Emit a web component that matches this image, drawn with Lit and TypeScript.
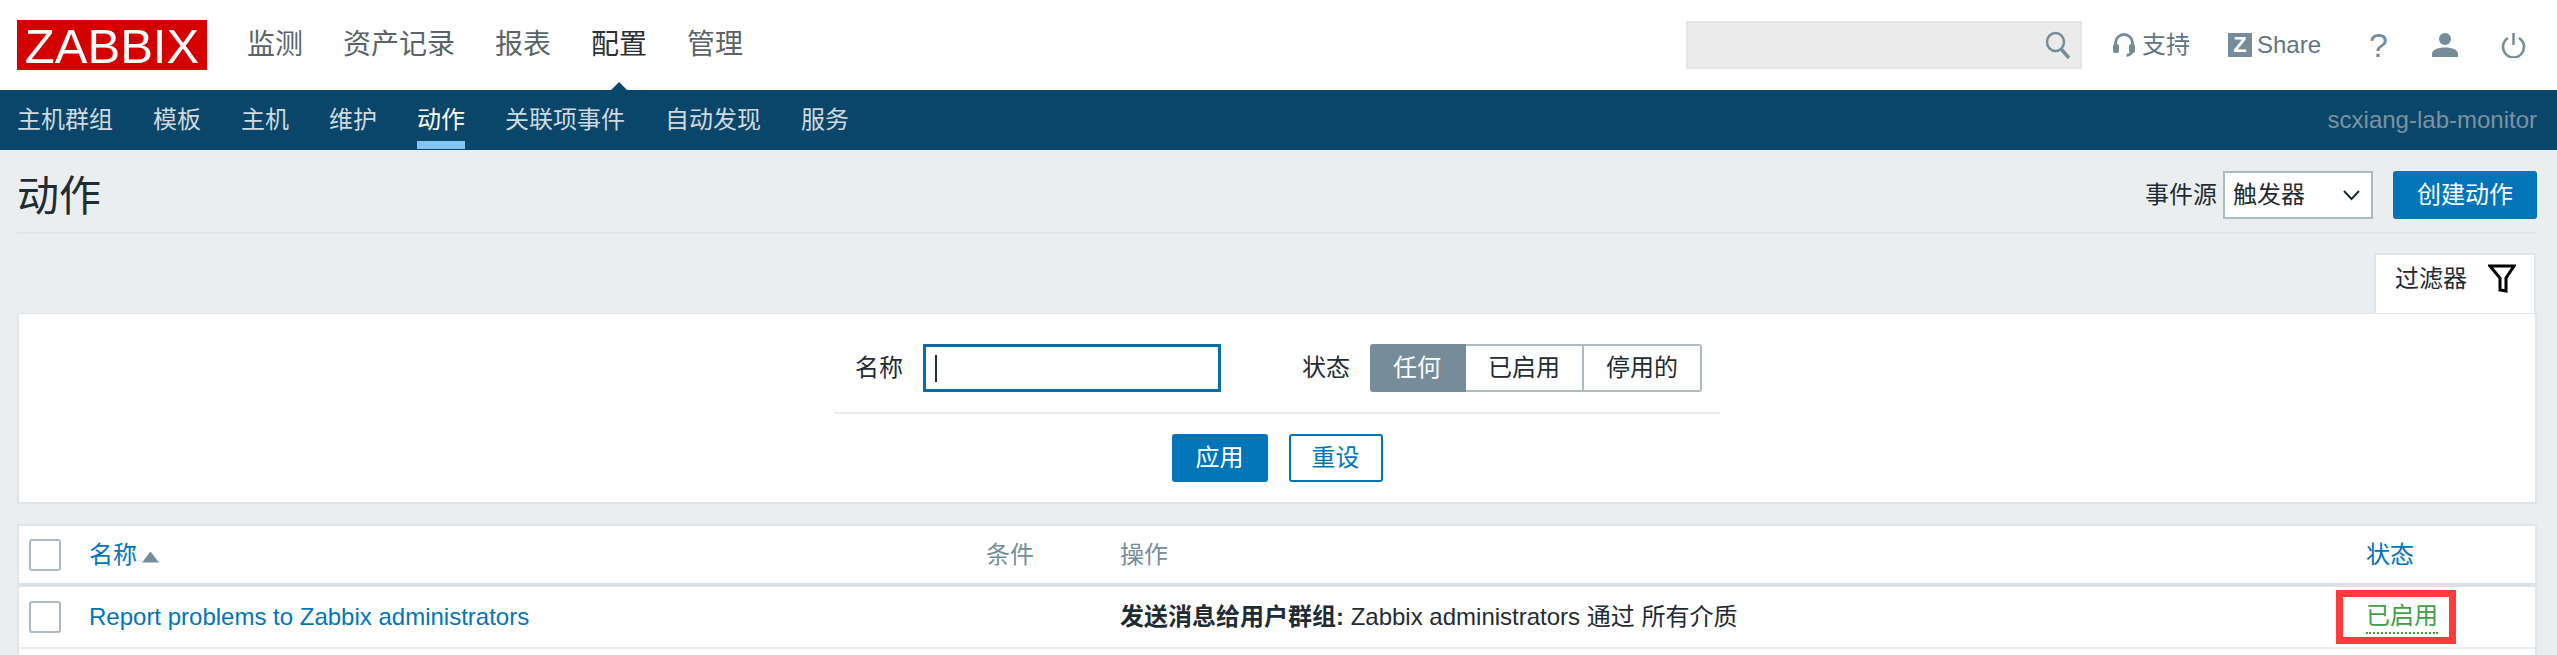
import { LitElement, html, css } from "lit";
import { customElement } from "lit/decorators.js";

const TOP = ["监测", "资产记录", "报表", "配置", "管理"];
const SUB = ["主机群组", "模板", "主机", "维护", "动作", "关联项事件", "自动发现", "服务"];

@customElement("app-root")
export class AppRoot extends LitElement {
  static styles = css`
    :host {
      display: flex;
      flex-direction: column;
      height: 655px;
      overflow: hidden;
      background: #ebeef0;
      color: #1f2c33;
      font: 24px/30px "Liberation Sans", "Noto Sans CJK SC", sans-serif;
      white-space: nowrap;
    }
    .top { height: 90px; flex: none; background: #fff; display: flex; align-items: center; padding: 0 31px 0 17px; box-sizing: border-box; }
    .logo { width: 190px; height: 50px; margin-top: -1px; background: #d40000; color: #fff; font-size: 49px; line-height: 52px; text-align: center; flex: none; }
    .mainnav { display: flex; gap: 40px; margin-left: 40px; font-size: 28px; color: #5a6468; flex: 1; height: 90px; align-items: center; }
    .mainnav span { position: relative; line-height: 36px; margin-top: 0; }
    .mainnav .on { color: #2b3236; }
    .mainnav .on::after { content: ""; position: absolute; left: 12px; top: 55px; width: 32px; height: 16px; background: #0a466a; clip-path: polygon(50% 0, 100% 100%, 0 100%); }
    .search { width: 396px; height: 48px; margin-top: -1px; box-sizing: border-box; background: #ebebeb; border: 2px solid #e5e5e5; display: flex; align-items: center; justify-content: flex-end; padding-right: 9px; }
    .icon { fill: none; stroke: #768d99; stroke-width: 2.5; display: block; flex: none; }
    .ilinks { display: flex; align-items: center; color: #5f7683; margin-left: 31px; height: 48px; }
    .ilink { display: flex; align-items: center; gap: 7px; }
    .zbox { width: 24px; height: 24px; background: #768d99; color: #fff; font-size: 22px; font-weight: 700; line-height: 24px; text-align: center; }
    .q { width: 15px; font-size: 34px; color: #768d99; text-align: center; margin-left: 48px; margin-right: 48px; }
    .sub { height: 60px; flex: none; background: #0a466a; display: flex; align-items: center; padding: 0 20px 0 17px; box-sizing: border-box; color: #cfd9df; }
    .subnav { display: flex; gap: 40px; flex: 1; }
    .subnav span { position: relative; }
    .subnav .on { color: #fff; }
    .subnav .on::after { content: ""; position: absolute; left: 0; right: 0; top: 36px; height: 8px; background: #84c5f4; }
    .host { color: #7b93a1; }
    .titlebar { flex: none; height: 82px; margin: 0 20px 0 17px; border-bottom: 2px solid #e1e5e8; display: flex; align-items: center; }
    h1 { margin: 12px 0 0; flex: 1; font-size: 42px; font-weight: 400; line-height: 50px; }
    .ctl { display: flex; align-items: center; margin-top: 8px; }
    .select { width: 150px; height: 48px; margin-left: 6px; box-sizing: border-box; background: #fff; border: 2px solid #acbbc2; display: flex; align-items: center; justify-content: space-between; padding: 0 11px 0 8px; }
    .btn { box-sizing: border-box; height: 48px; border-radius: 3px; background: #0275b8; color: #fff; display: flex; align-items: center; justify-content: center; }
    .create { width: 144px; margin-left: 20px; }
    .tabrow { flex: none; display: flex; justify-content: flex-end; margin: 19px 21px 0 0; }
    .tab { width: 162px; height: 60px; box-sizing: border-box; background: #fff; border: 2px solid #e1e5e8; border-bottom: 0; display: flex; align-items: flex-start; padding: 9px 0 0 19px; gap: 21px; }
    .panel { flex: none; margin: 0 20px 0 17px; height: 191px; box-sizing: border-box; background: #fff; border: 2px solid #e1e5e8; border-top: 1px solid #e1e5e8; display: flex; flex-direction: column; align-items: center; padding-top: 30px; }
    .form { width: 886px; box-sizing: border-box; display: flex; align-items: center; padding: 0 18px 20px 21px; border-bottom: 2px solid #ebeef0; }
    .input { width: 300px; height: 48px; box-sizing: border-box; margin-left: 20px; border: 3px solid #0b6ba3; display: flex; align-items: center; padding-left: 9px; }
    .caret { width: 2px; height: 27px; background: #1f2c33; }
    .status-label { margin-left: 81px; }
    .seg { display: flex; margin-left: 20px; height: 48px; }
    .seg span { box-sizing: border-box; display: flex; align-items: center; justify-content: center; background: #fff; border: 2px solid #acbbc2; border-left: 0; }
    .seg .a { width: 96px; background: #768d99; border-color: #768d99; color: #fff; border-radius: 3px 0 0 3px; }
    .seg .b { width: 118px; }
    .seg .c { width: 118px; border-radius: 0 3px 3px 0; }
    .actions { display: flex; gap: 21px; margin-top: 20px; }
    .apply { width: 96px; }
    .reset { width: 94px; background: #fff; color: #0275b8; border: 2px solid #0275b8; }
    .list { flex: 1; margin: 20px 20px 0 17px; background: #fff; border: 2px solid #e1e5e8; border-bottom: 0; }
    table { width: 100%; border-collapse: collapse; table-layout: fixed; }
    th { font-weight: 400; text-align: left; height: 57px; padding: 0; border-bottom: 4px solid #dde2e6; color: #768d99; }
    td { height: 60px; padding: 0; border-bottom: 2px solid #ebeef0; }
    .link { color: #0275b8; }
    .cb { display: block; width: 32px; height: 32px; box-sizing: border-box; margin-left: 10px; border: 2px solid #acbbc2; border-radius: 3px; background: #fff; }
    .sort { display: inline-block; width: 17px; height: 11px; margin-left: 5px; background: #768d99; clip-path: polygon(50% 0, 100% 100%, 0 100%); }
    .pad { padding-left: 30px; }
    .hl { box-sizing: border-box; display: flex; width: 120px; height: 54px; border: 7px solid #ff3b3b; padding: 0 0 0 23px; align-items: center; }
    .on-status { color: #429e47; line-height: 30px; border-bottom: 2px dotted #429e47; height: 31px; }
    b { font-weight: 700; }
  `;

  render() {
    return html`
      <header class="top">
        <div class="logo">ZABBIX</div>
        <nav class="mainnav">${TOP.map((t) => html`<span class=${t === "配置" ? "on" : ""}>${t}</span>`)}</nav>
        <div class="search">
          <svg class="icon" width="26" height="28" viewBox="0 0 26 28"><ellipse cx="10.500" cy="11" rx="8.500" ry="9"/><path d="M16 18l8 9" stroke-width="3.500"/></svg>
        </div>
        <div class="ilinks">
          <div class="ilink">
            <svg class="icon" width="22" height="24" viewBox="0 0 22 24"><path d="M2.500 14V10a8.500 8.500 0 0 1 17 0v6c0 3.500-2 6-6 6.500" stroke-width="2.800"/><rect x="0" y="11" width="6" height="9" rx="2" fill="#768d99" stroke="none"/><rect x="16" y="11" width="6" height="9" rx="2" fill="#768d99" stroke="none"/></svg>
            <span>支持</span>
          </div>
          <div class="ilink" style="margin-left:38px;gap:5px"><span class="zbox">Z</span><span>Share</span></div>
          <span class="q">?</span>
          <svg class="icon" width="26" height="24" viewBox="0 0 26 24" style="stroke:none;fill:#768d99"><circle cx="13" cy="6" r="6"/><path d="M0 24v-3c0-4 5-6.500 13-6.500S26 17 26 21v3z"/></svg>
          <svg class="icon" width="25" height="25" viewBox="0 0 25 25" style="margin-left:43px"><path d="M7 5a10.500 10.500 0 1 0 11 0"/><path d="M12.500 0v12"/></svg>
        </div>
      </header>
      <nav class="sub">
        <div class="subnav">${SUB.map((t) => html`<span class=${t === "动作" ? "on" : ""}>${t}</span>`)}</div>
        <span class="host">scxiang-lab-monitor</span>
      </nav>
      <div class="titlebar">
        <h1>动作</h1>
        <div class="ctl">
          <span>事件源</span>
          <div class="select"><span>触发器</span>
            <svg width="17" height="11" viewBox="0 0 17 11" fill="none" stroke="#1f2c33" stroke-width="2"><path d="M1 1l7.500 8L16 1"/></svg>
          </div>
          <div class="btn create">创建动作</div>
        </div>
      </div>
      <div class="tabrow">
        <div class="tab"><span>过滤器</span>
          <svg width="28" height="29" viewBox="0 0 28 29" fill="none" stroke="#000" stroke-width="3"><path d="M2 2h24L18 14v13l-6-1V14z"/></svg>
        </div>
      </div>
      <section class="panel">
        <div class="form">
          <span>名称</span>
          <div class="input"><i class="caret"></i></div>
          <span class="status-label">状态</span>
          <div class="seg"><span class="a">任何</span><span class="b">已启用</span><span class="c">停用的</span></div>
        </div>
        <div class="actions">
          <div class="btn apply">应用</div>
          <div class="btn reset">重设</div>
        </div>
      </section>
      <section class="list">
        <table>
          <colgroup><col style="width:70px"/><col style="width:897px"/><col style="width:134px"/><col style="width:1216px"/><col/></colgroup>
          <thead><tr>
            <th><i class="cb"></i></th>
            <th class="link">名称<i class="sort"></i></th>
            <th>条件</th>
            <th>操作</th>
            <th class="link pad">状态</th>
          </tr></thead>
          <tbody><tr>
            <td><i class="cb"></i></td>
            <td class="link">Report problems to Zabbix administrators</td>
            <td></td>
            <td><b>发送消息给用户群组:</b> Zabbix administrators 通过 所有介质</td>
            <td><div class="hl"><span class="on-status">已启用</span></div></td>
          </tr></tbody>
        </table>
      </section>
    `;
  }
}
